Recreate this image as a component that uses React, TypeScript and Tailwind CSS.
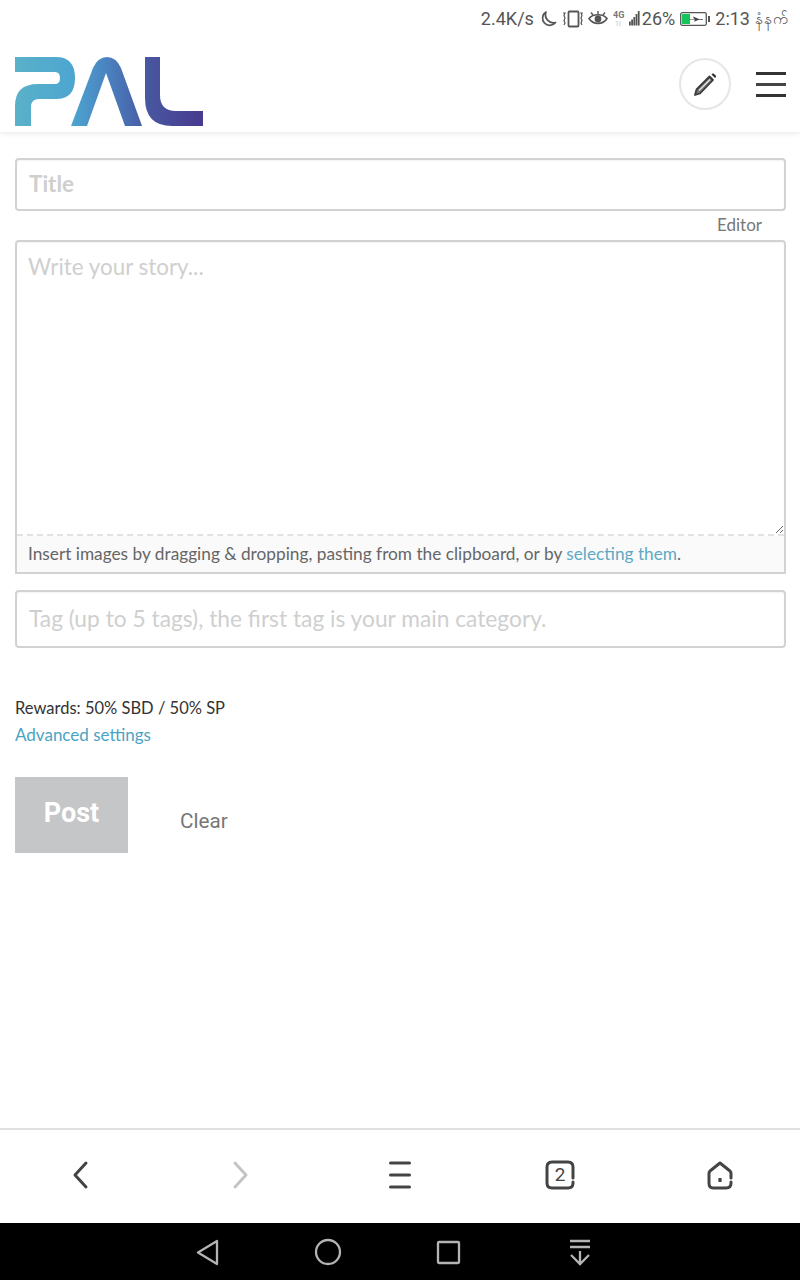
const bodyFont = "font-['Lato','Open_Sans',sans-serif]";

function StatusBar() {
  return (
    <div className="relative z-10 h-[40px] bg-white flex items-center justify-end pr-[12px] pb-[3px] text-[#555] font-['Roboto',sans-serif] text-[18px] leading-none">
      <span>2.4K/s</span>
      {/* moon */}
      <svg width="18" height="18" viewBox="0 0 18 18" className="ml-[5px]" fill="none" stroke="#555" strokeWidth="1.7">
        <path d="M7 2 A7.2 7.2 0 1 0 16.5 12.5 A8 8 0 0 1 7 2Z" strokeLinejoin="round" />
      </svg>
      {/* vibrate */}
      <svg width="22" height="18" viewBox="0 0 22 18" className="ml-[5px]" fill="none" stroke="#555">
        <rect x="6.500" y="1.500" width="10" height="15" rx="1" strokeWidth="1.800" />
        <path d="M1 3h2l-1 2.500 1 2.500-1 2.500 1 2.500-1 2M21 3h-2l1 2.500-1 2.500 1 2.500-1 2.500 1 2" strokeWidth="1.200" />
      </svg>
      {/* eye */}
      <svg width="20" height="18" viewBox="0 0 20 18" className="ml-[4px]" fill="none" stroke="#555">
        <path d="M1 8.500 C5 3.500 15 3.500 19 8.500 C15 15 5 15 1 8.500Z" strokeWidth="1.600" />
        <circle cx="10" cy="9" r="3.400" fill="#555" stroke="none" />
        <path d="M3 2.500l2 2.500M10 1v3M17 2.500l-2 2.500" strokeWidth="1.400" />
      </svg>
      {/* signal */}
      <svg width="27" height="18" viewBox="0 0 27 18" className="ml-[5px]">
        <text x="0" y="8" fontSize="9" fontWeight="700" fill="#777" fontFamily="Roboto">4G</text>
        <text x="2" y="15.500" fontSize="7" fill="#c4c4c4" fontFamily="Roboto">1l</text>
        <rect x="16" y="11.500" width="1.800" height="4" fill="#555" />
        <rect x="18.200" y="9.500" width="1.800" height="6" fill="#555" />
        <rect x="20.400" y="7" width="1.800" height="8.500" fill="#555" />
        <rect x="22.600" y="4" width="1.800" height="11.500" fill="#555" />
        <rect x="24.800" y="1" width="1.800" height="14.500" fill="#555" />
      </svg>
      <span className="ml-[2px]">26%</span>
      {/* battery */}
      <svg width="30" height="14" viewBox="0 0 30 14" className="ml-[5px]">
        <rect x="0.700" y="0.700" width="25.600" height="12.600" rx="1.500" fill="#fff" stroke="#555" strokeWidth="1.300" />
        <rect x="2" y="2" width="8" height="10" fill="#16c45a" />
        <path d="M9 7h5l-1-2.500 6 2.500h4v0.800h-4l-5 2 1-2.300h-6z" fill="#444" />
        <rect x="28" y="4" width="2" height="6" fill="#555" />
      </svg>
      <span className="ml-[5px]">2:13</span>
      <span className="ml-[5px] text-[15.500px] font-['Noto_Sans',sans-serif]">နံနက်</span>
    </div>
  );
}

function Logo() {
  return (
    <svg width="190" height="71" viewBox="14 56 190 71" className="block">
      <defs>
        <linearGradient id="pal" gradientUnits="userSpaceOnUse" x1="15" y1="0" x2="203" y2="0">
          <stop offset="0" stopColor="#5ab1c9" />
          <stop offset="0.3" stopColor="#4da6d0" />
          <stop offset="0.5" stopColor="#4a80bf" />
          <stop offset="0.72" stopColor="#48559f" />
          <stop offset="1" stopColor="#483a8f" />
        </linearGradient>
      </defs>
      <path
        fill="url(#pal)"
        d="M15 57H56Q75 57 75 78Q75 99 56 99H39Q31 99 31 107V126H15V106Q15 84 38 84H55Q60 84 60 78Q60 72 55 72H15Z"
      />
      <path
        fill="url(#pal)"
        d="M71 126L93 68Q98 57 107 57Q116 57 121 68L142 126H125L106 73L87 126Z"
      />
      <path fill="url(#pal)" d="M145 57H160V95Q160 111 176 111H203V126H172Q145 126 145 98Z" />
    </svg>
  );
}

function Header() {
  return (
    <header className="h-[92px] flex items-center justify-between px-[14px] bg-white shadow-[0_1px_6px_rgba(0,0,0,0.1)] relative">
      <div className="mt-[11px]">
        <Logo />
      </div>
      <div className="flex items-center gap-[25px] mt-[-4px]">
        <button className="w-[52px] h-[52px] rounded-full border-2 border-[#e6e6e6] flex items-center justify-center">
          <svg width="26" height="26" viewBox="0 0 26 26">
            <path d="M3 24l1.500-5.500L17.500 5.500l3.500 3.500L8 22.500z" fill="#777" stroke="#3a3a3a" strokeWidth="1.800" strokeLinejoin="round" />
            <path d="M7 19.500l11-11" stroke="#e4e4e4" strokeWidth="1.200" />
            <path d="M19.500 3.500l.7-.7c.5-.5 1.200-.5 1.700 0l1.800 1.800c.5.500.5 1.200 0 1.700l-.7.700z" fill="#333" />
          </svg>
        </button>
        <div className="w-[30px] flex flex-col gap-[8px]">
          <div className="h-[3px] bg-[#333]" />
          <div className="h-[3px] bg-[#444]" />
          <div className="h-[3px] bg-[#333]" />
        </div>
      </div>
    </header>
  );
}

function Form() {
  const fieldBorder = "border-2 border-[#d2d2d2] rounded-[4px] shadow-[inset_0_1px_2px_rgba(0,0,0,0.05)]";
  return (
    <main className={`flex-1 px-[15px] pt-[26px] ${bodyFont} bg-white`}>
      <input
        readOnly
        placeholder="Title"
        className={`w-[771px] h-[53px] px-[12px] pb-[2px] text-[22.500px] font-bold outline-none placeholder:text-[#cfcfcf] ${fieldBorder}`}
      />
      <div className="h-[29px] flex items-center justify-end pr-[23px] pb-[2px] text-[17px] text-[#777]">Editor</div>
      <div className="w-[771px] h-[334px] flex flex-col overflow-hidden border-2 border-[#d2d2d2] rounded-t-[4px] shadow-[inset_0_1px_2px_rgba(0,0,0,0.05)]">
        <textarea
          readOnly
          placeholder="Write your story..."
          className="flex-1 px-[11px] pt-[12px] pb-[13px] text-[22.400px] leading-[26px] outline-none resize-y bg-transparent placeholder:text-[#cfcfcf] border-b-2 border-dashed border-[#e2e2e2]"
        />
        <div className="h-[36px] flex items-center px-[11px] bg-[#fafafa] text-[17.250px] text-[#666] whitespace-nowrap">
          Insert images by dragging &amp; dropping, pasting from the clipboard, or by&nbsp;
          <span className="text-[#5fa9c4]">selecting them</span>.
        </div>
      </div>
      <input
        readOnly
        placeholder="Tag (up to 5 tags), the first tag is your main category."
        className={`mt-[16px] w-[771px] h-[58px] px-[12px] pb-[1px] text-[22.750px] outline-none placeholder:text-[#cfcfcf] ${fieldBorder}`}
      />
      <p className="mt-[47px] text-[16.500px] leading-[26px] text-[#333]">Rewards: 50% SBD / 50% SP</p>
      <p className="text-[17px] leading-[27px] text-[#4ba3c3]">Advanced settings</p>
      <div className="mt-[29px] flex items-center">
        <button className="w-[113px] h-[76px] pb-[4px] bg-[#c4c6c8] text-white text-[27px] font-bold font-['Roboto',sans-serif]">Post</button>
        <span className="ml-[52px] mt-[13px] text-[20.700px] text-[#777] font-['Roboto',sans-serif]">Clear</span>
      </div>
    </main>
  );
}

function BrowserBar() {
  const dark = "#444";
  return (
    <nav className="h-[95px] border-t-2 border-[#e0e0e0] bg-white grid grid-cols-5 place-items-center pb-[4px]">
      <svg width="30" height="30" viewBox="0 0 30 30" fill="none" stroke={dark} strokeWidth="3" strokeLinecap="round" strokeLinejoin="round">
        <path d="M21 3L10 15l11 12" />
      </svg>
      <svg width="30" height="30" viewBox="0 0 30 30" fill="none" stroke="#c4c4c4" strokeWidth="3" strokeLinecap="round" strokeLinejoin="round">
        <path d="M10 3l11 12L10 27" />
      </svg>
      <svg width="30" height="30" viewBox="0 0 30 30" fill="none" stroke={dark} strokeWidth="3" strokeLinecap="round">
        <path d="M5.500 3h19M5.500 15h19M5.500 27h19" />
      </svg>
      <div className="relative w-[30px] h-[30px]">
        <svg width="30" height="30" viewBox="0 0 30 30" fill="none" stroke={dark} strokeWidth="3" strokeLinecap="round">
          <path d="M28 22v1q0 5-5 5H7q-5 0-5-5V7q0-5 5-5h16q5 0 5 5v11" />
        </svg>
        <span className="absolute inset-0 flex items-center justify-center text-[19px] leading-none text-[#444] font-['Roboto',sans-serif]">2</span>
      </div>
      <svg width="30" height="30" viewBox="0 0 30 30" fill="none" stroke={dark} strokeWidth="3" strokeLinecap="round" strokeLinejoin="round">
        <path d="M26 22v1q0 5-5 5H8q-4 0-4-5V13.500q0-1.500 1-2.500L15 3l10 8q1 1 1 2.500v4.500" />
        <path d="M15 18v4" strokeWidth="3.200" strokeLinecap="butt" />
      </svg>
    </nav>
  );
}

function AndroidNav() {
  const stroke = "#b4b4b4";
  return (
    <div className="h-[57px] bg-black flex items-center justify-center gap-[72px] pr-[12px]">
      <svg width="48" height="30" viewBox="0 0 48 30" fill="none" stroke={stroke} strokeWidth="2.300" strokeLinejoin="round">
        <path d="M33 4v23L14 15.500z" />
      </svg>
      <svg width="48" height="30" viewBox="0 0 48 30" fill="none" stroke={stroke} strokeWidth="2.300">
        <circle cx="24" cy="15" r="12" />
      </svg>
      <svg width="48" height="30" viewBox="0 0 48 30" fill="none" stroke={stroke} strokeWidth="2.300">
        <rect x="14" y="5" width="21" height="21" rx="1" />
      </svg>
      <svg width="48" height="30" viewBox="0 0 48 30" className="ml-[12px]" fill="none" stroke={stroke} strokeWidth="2.300">
        <path d="M14 4h20M14 10h20M24 14v14M15 18l9 9 9-9" />
      </svg>
    </div>
  );
}

export default function App() {
  return (
    <div className="w-[800px] h-[1280px] flex flex-col bg-white overflow-hidden">
      <StatusBar />
      <Header />
      <Form />
      <BrowserBar />
      <AndroidNav />
    </div>
  );
}
